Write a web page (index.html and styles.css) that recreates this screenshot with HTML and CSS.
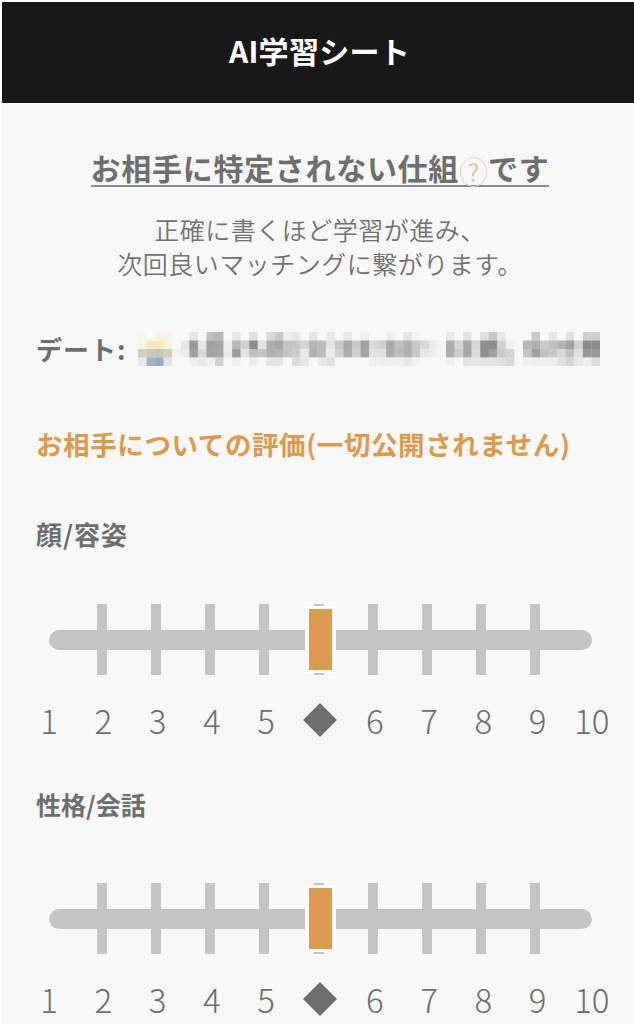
FILE: index.html
```html
<!DOCTYPE html>
<html lang="ja">
<head>
<meta charset="utf-8">
<title>AI学習シート</title>
<link rel="stylesheet" href="styles.css">
</head>
<body>
<main class="screen">
  <header class="topbar"><h1 class="topbar-title">AI学習シート</h1></header>
  <section class="content">
    <div class="intro">
      <h2 class="notice"><span class="notice-text">お相手に特定されない仕組<span class="help">?</span>です</span></h2>
      <p class="lead">正確に書くほど学習が進み、<br>次回良いマッチングに繋がります。</p>
    </div>
    <div class="date-row">
      <span class="date-label">デート:</span>
      <svg class="mosaic" id="mosaic" viewBox="0 0 54 4" preserveAspectRatio="none" aria-hidden="true"></svg>
    </div>
    <h3 class="eval-title">お相手についての評価(一切公開されません)</h3>

    <div class="rating">
      <div class="rating-name">顔/容姿</div>
      <div class="scale">
        <div class="ticks">
          <span></span><i class="tick"></i><i class="tick"></i><i class="tick"></i><i class="tick"></i>
          <span class="thumb-cell"><i class="stub"></i><b class="thumb"></b></span>
          <i class="tick"></i><i class="tick"></i><i class="tick"></i><i class="tick"></i><span></span>
        </div>
        <div class="labels">
          <span>1</span><span>2</span><span>3</span><span>4</span><span>5</span><span class="diamond-cell"><i class="diamond"></i></span><span>6</span><span>7</span><span>8</span><span>9</span><span>10</span>
        </div>
      </div>
    </div>

    <div class="rating">
      <div class="rating-name">性格/会話</div>
      <div class="scale">
        <div class="ticks">
          <span></span><i class="tick"></i><i class="tick"></i><i class="tick"></i><i class="tick"></i>
          <span class="thumb-cell"><i class="stub"></i><b class="thumb"></b></span>
          <i class="tick"></i><i class="tick"></i><i class="tick"></i><i class="tick"></i><span></span>
        </div>
        <div class="labels">
          <span>1</span><span>2</span><span>3</span><span>4</span><span>5</span><span class="diamond-cell"><i class="diamond"></i></span><span>6</span><span>7</span><span>8</span><span>9</span><span>10</span>
        </div>
      </div>
    </div>
  </section>
</main>
<script src="mosaic.js"></script>
</body>
</html>
```
FILE: styles.css
```css
* { box-sizing: border-box; }
html, body { margin: 0; height: 1024px; overflow: hidden; background: #fff; }
body { font-family: "Noto Sans CJK JP", "Noto Sans", sans-serif; color: #6e6e6e; }
.screen { padding: 2px 0 0 2px; height: 1024px; overflow: hidden; }
.topbar { height: 101px; background: #181818; display: flex; align-items: center; justify-content: center; padding-bottom: 5px; padding-left: 3px; }
.topbar-title { margin: 0; color: #fff; font-size: 30px; font-weight: 700; letter-spacing: .3px; line-height: 40px; }
.content { background: #f8f8f8; height: 921px; padding-top: 47px; }
.intro { text-align: center; padding-left: 4px; }
.notice { margin: 0; font-size: 30px; font-weight: 700; line-height: 35px; letter-spacing: .7px; }
.notice-text { display: inline-block; height: 37px; border-bottom: 2px solid #8a8a8a; }
.help { display: inline-block; width: 27px; height: 30px; margin: -4px 1px; vertical-align: -2px; border: 1.5px solid #e4d9bf; border-radius: 50%; font-size: 24px; font-weight: 400; line-height: 27px; letter-spacing: 0; color: #dcc79c; text-align: center; }
.lead { margin: 25px 0 0; font-size: 25px; font-weight: 350; line-height: 34px; letter-spacing: .5px; color: #727272; }
.date-row { display: flex; align-items: center; margin-top: 47px; padding-left: 34px; height: 44px; }
.date-label { width: 102px; flex: none; font-size: 26px; font-weight: 700; letter-spacing: 1px; line-height: 34px; white-space: nowrap; }
.mosaic { width: 462px; height: 34px; flex: none; filter: blur(.5px); }
.eval-title { margin: 55px 0 0 34px; font-size: 26.5px; font-weight: 700; line-height: 36px; color: #dd9a4b; letter-spacing: .6px; white-space: nowrap; }
.rating-name { margin: 55px 0 0 34px; font-size: 26px; font-weight: 700; line-height: 34px; letter-spacing: 1px; }
.rating + .rating .rating-name { margin-top: 46px; font-size: 25px; letter-spacing: 0; }
.scale { margin-top: 53px; }
.rating + .rating .scale { margin-top: 62px; }
.ticks { position: relative; display: grid; grid-template-columns: repeat(11, 54.1px); margin-left: 19px; height: 71px; justify-items: center; }
.ticks::before { content: ""; position: absolute; left: 28px; width: 543px; top: 25.5px; height: 20px; border-radius: 10px; background: #c4c4c4; }
.tick { position: relative; width: 10px; height: 71px; background: #c4c4c4; }
.thumb-cell { position: relative; width: 10px; height: 71px; display: flex; justify-content: center; }
.stub { width: 10px; height: 71px; background: #c4c4c4; flex: none; }
.thumb { position: absolute; top: 2px; left: -9px; width: 31px; height: 67px; border-style: solid; border-color: #fff; border-width: 3px 4px; background: #dd9a4b; }
.labels { display: grid; grid-template-columns: repeat(11, 54.27px); margin: 24px 0 0 20px; height: 42px; justify-items: center; align-items: center; font-size: 33px; font-weight: 300; line-height: 42px; color: #6e6e6e; }
.diamond-cell { display: flex; align-items: center; justify-content: center; height: 42px; }
.diamond { width: 24px; height: 24px; background: #6e6e6e; transform: rotate(45deg); }
```
FILE: mosaic.js
```js
var rows = [
  "f6f5ee fdfbf2 f7f3dc f7f5ea f8 f8 e6 f8 c0 b8 f8 e6 f8 e0 f8 d8 c8 ee e6 f8 e4 f8 e8 f8 e8 f8 ee f8 f8 ec f8 e4 f4 f8 f8 f8 e8 f8 e4 f8 e0 c8 e8 f8 f8 f8 c8 f8 e4 f8 e0 f8 d0 d0",
  "f6f5ea f9e9b8 f9e9b8 f7f3e0 f8 e6 99 e4 a0 a4 ec b8 d0 8c e4 b0 a8 c4 c8 d4 b4 bc e4 c8 a8 c8 a0 d8 d0 a8 c0 b0 c8 d8 ec f4 ac d4 a8 d8 90 8c d0 f0 f8 b8 b0 c8 c0 b4 a0 d0 8c 8c",
  "d0d0bc c8c8b8 c4c4b8 d0d0b8 f4f2e6 ec a0 d8 a4 a8 ec 9c e4 bc c4 b0 b4 c4 cc e8 b0 bc ec d0 ac d0 a4 e0 e0 ac bc b0 c8 e8 ee f4 ac cc a8 dc 90 a0 c8 d4 f8 c4 a0 c0 c8 d8 c0 e0 98 98",
  "e8eaf0 a4b2c8 98a8c4 e0e4ec f8 f8 f0 e8 f0 d0 f8 ee f8 ec f8 e4 e4 f8 dc e8 f8 e8 e0 f8 f8 f8 f8 f0 ee ee f0 e8 f4 f8 f8 f8 ee f8 e4 e8 e4 e4 e0 d8 f8 f0 ee ee ee e0 d4 e8 f0 dc"
];
var svg = document.getElementById("mosaic");
rows.forEach(function (row, y) {
  row.split(" ").forEach(function (c, x) {
    var rect = document.createElementNS("http://www.w3.org/2000/svg", "rect");
    rect.setAttribute("x", x);
    rect.setAttribute("y", y);
    rect.setAttribute("width", 1.02);
    rect.setAttribute("height", 1.02);
    rect.setAttribute("fill", "#" + (c.length === 2 ? c + c + c : c));
    svg.appendChild(rect);
  });
});
```
